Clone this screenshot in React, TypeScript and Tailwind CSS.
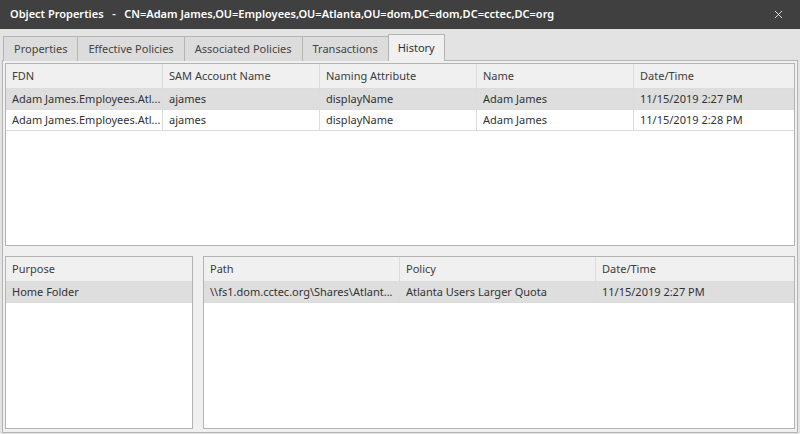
import { X } from "lucide-react";

const font = { fontFamily: '"Noto Sans", "Open Sans", sans-serif' };

const tabs = ["Properties", "Effective Policies", "Associated Policies", "Transactions", "History"];

const historyCols = ["FDN", "SAM Account Name", "Naming Attribute", "Name", "Date/Time"];
const historyRows = [
    ["Adam James.Employees.Atl...", "ajames", "displayName", "Adam James", "11/15/2019 2:27 PM"],
    ["Adam James.Employees.Atl...", "ajames", "displayName", "Adam James", "11/15/2019 2:28 PM"],
];

const pathCols = ["Path", "Policy", "Date/Time"];
const pathRows = [["\\\\fs1.dom.cctec.org\\Shares\\Atlant...", "Atlanta Users Larger Quota", "11/15/2019 2:27 PM"]];

function Grid({ cols, rows, widths }: { cols: string[]; rows: string[][]; widths: string[] }) {
    return (
        <div className="flex flex-col h-full bg-white border border-[#b4b4b4]">
            <div className="flex h-[25px] bg-[#f0f0f0] border-b border-[#dcdcdc]">
                {cols.map((c, i) => (
                    <div
                        key={c}
                        className={`${widths[i]} flex items-center px-[6px] text-[#3c3c3c] ${i < cols.length - 1 ? "border-r border-[#dcdcdc]" : ""}`}
                    >
                        {c}
                    </div>
                ))}
            </div>
            {rows.map((r, ri) => (
                <div
                    key={ri}
                    className={`flex h-[21px] border-b border-[#dcdcdc] ${ri === 0 ? "bg-[#dedede]" : "bg-white"}`}
                >
                    {r.map((v, i) => (
                        <div
                            key={i}
                            className={`${widths[i]} flex items-center px-[6px] text-[#333] whitespace-nowrap overflow-hidden ${i < r.length - 1 ? "border-r border-[#dcdcdc]" : ""}`}
                        >
                            {v}
                        </div>
                    ))}
                </div>
            ))}
        </div>
    );
}

export default function App() {
    return (
        <div className="w-[800px] h-[434px] flex flex-col bg-[#e3e3e3] text-[11px] overflow-hidden" style={font}>
            <div className="h-[29px] shrink-0 bg-[#404040] flex items-center justify-between pl-[10px] pr-[15px] text-white">
                <div className="font-semibold">
                    Object Properties&nbsp;&nbsp;&nbsp;-&nbsp;&nbsp;&nbsp;CN=Adam James,OU=Employees,OU=Atlanta,OU=dom,DC=dom,DC=cctec,DC=org
                </div>
                <X className="w-[13px] h-[13px]" strokeWidth={1.5} />
            </div>

            <div className="flex-1 flex flex-col px-[2px] pt-[5px] pb-[1px]">
                <div className="flex items-end h-[27px] pl-[1px] relative z-10">
                    {tabs.map((t) => {
                        const active = t === "History";
                        return (
                            <div
                                key={t}
                                className={
                                    active
                                        ? "h-[27px] px-[9px] flex items-center bg-[#f0f0f0] border border-b-0 border-[#b4b4b4] text-[#333]"
                                        : "h-[25px] px-[10px] flex items-center bg-[#dcdcdc] border border-r-0 border-b-0 border-[#b4b4b4] text-[#444]"
                                }
                            >
                                {t}
                            </div>
                        );
                    })}
                </div>

                <div className="flex-1 flex flex-col -mt-px bg-[#f0f0f0] border border-[#b4b4b4] p-[2px] pb-[3px] gap-[10px]">
                    <div className="h-[183px]">
                        <Grid
                            cols={historyCols}
                            rows={historyRows}
                            widths={["w-[157px]", "w-[157px]", "w-[157px]", "w-[157px]", "flex-1"]}
                        />
                    </div>
                    <div className="flex-1 flex gap-[10px]">
                        <div className="w-[188px]">
                            <Grid cols={["Purpose"]} rows={[["Home Folder"]]} widths={["flex-1"]} />
                        </div>
                        <div className="flex-1">
                            <Grid cols={pathCols} rows={pathRows} widths={["w-[196px]", "w-[196px]", "flex-1"]} />
                        </div>
                    </div>
                </div>
            </div>
        </div>
    );
}
